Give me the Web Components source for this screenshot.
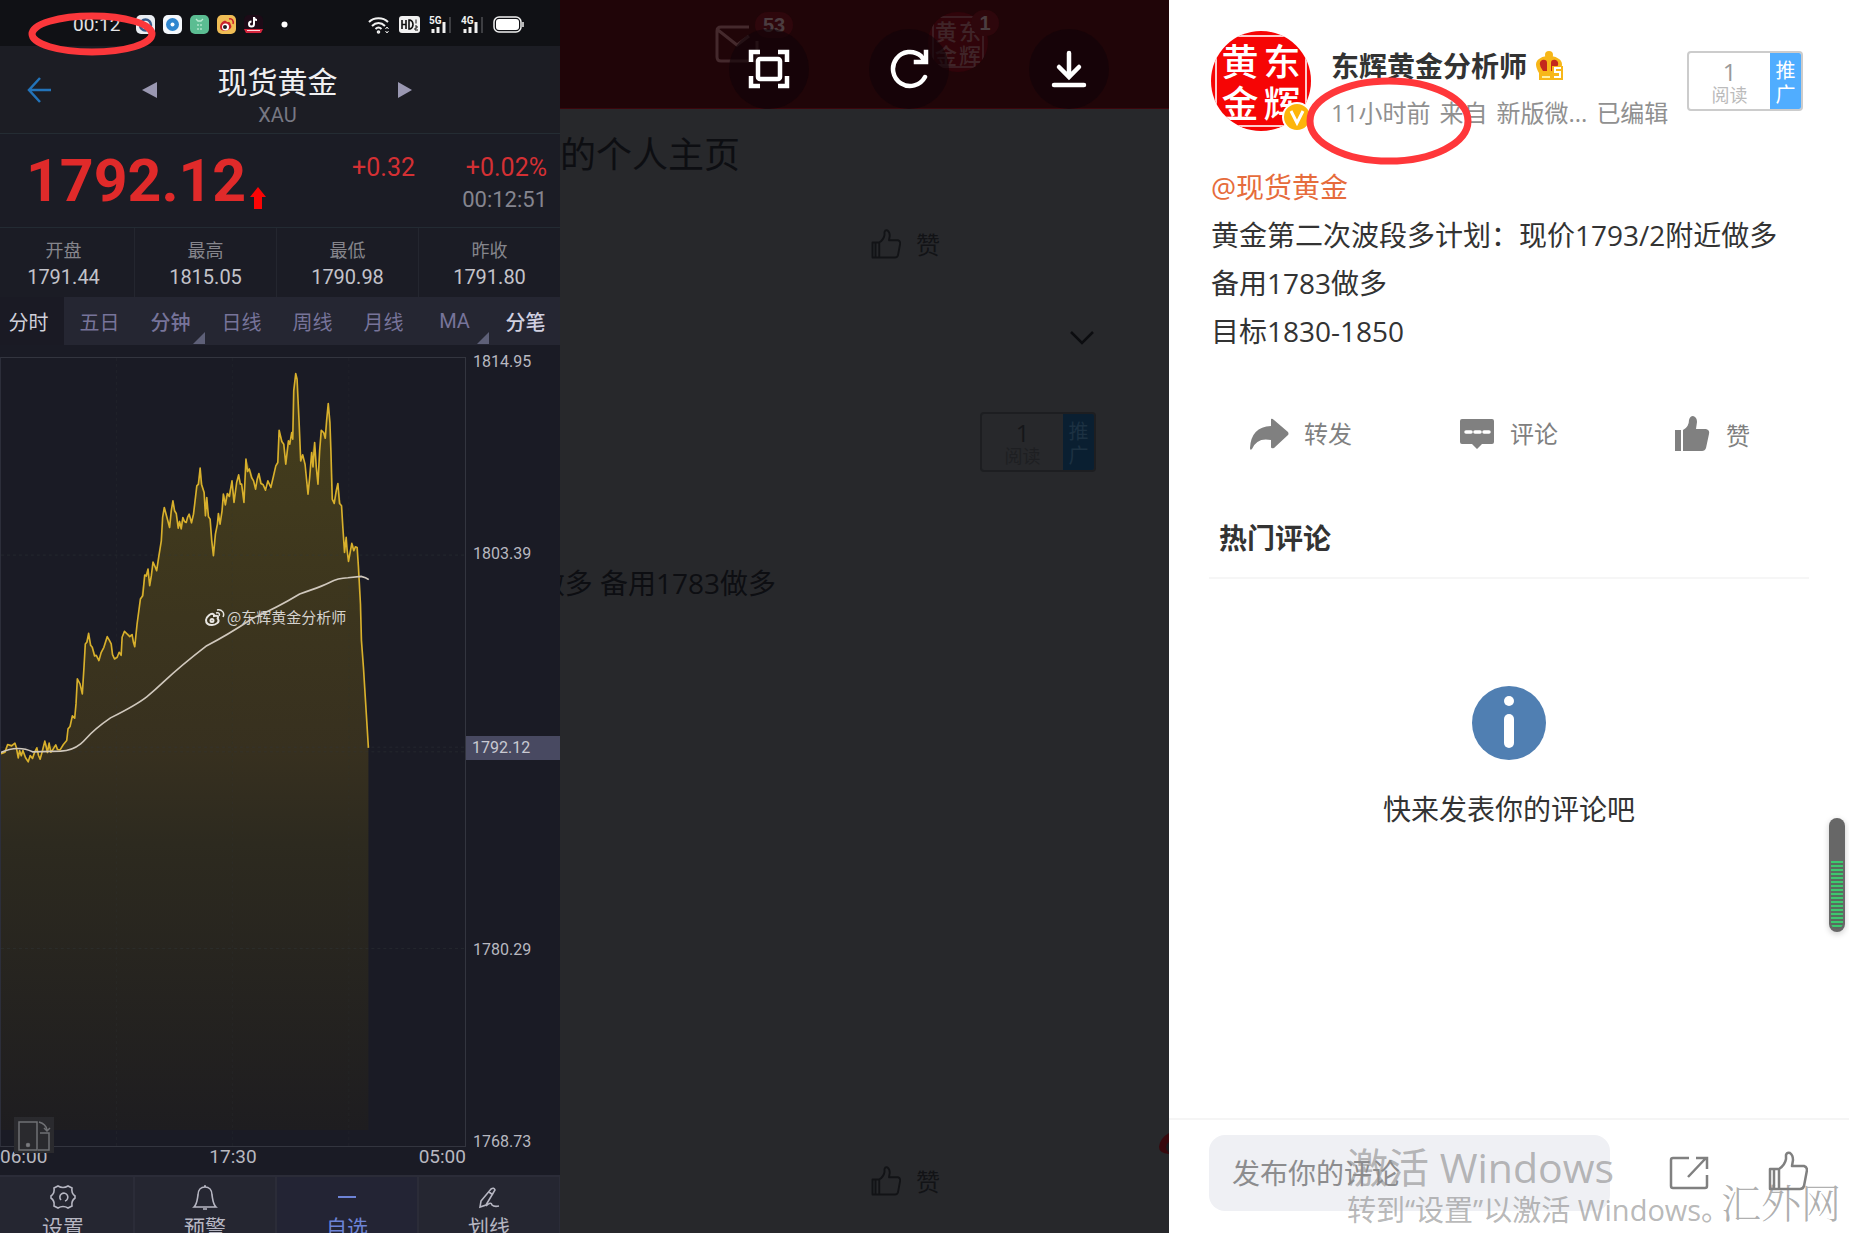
<!DOCTYPE html>
<html lang="zh-CN">
<head>
<meta charset="utf-8">
<title>现货黄金</title>
<style>
  html, body { margin: 0; height: 100%; }
  body { overflow: hidden; background: #27282b; font-family: "Open Sans", "Noto Sans CJK SC", sans-serif; }
</style>
</head>
<body>
<desk-view>
  <quote-screen slot="quote"></quote-screen>
  <profile-backdrop slot="backdrop"></profile-backdrop>
  <post-panel slot="post"></post-panel>
</desk-view>
<script>
const base = '<style>*{box-sizing:border-box}button{font:inherit;color:inherit;background:none;border:0;padding:0;margin:0;cursor:pointer}svg{display:block;flex:none}</style>';
function define(name, render) {
  customElements.define(name, class extends HTMLElement {
    connectedCallback() {
      if (this.shadowRoot) return;
      const t = document.createElement('template');
      t.innerHTML = base + render(this);
      this.attachShadow({ mode: 'open' }).append(t.content.cloneNode(true));
    }
  });
}

define('desk-view', () => `
<style>
  :host { display: grid; grid-template-columns: 560px minmax(0, 1fr) 680px; height: 100vh; position: relative; overflow: hidden; }
  ::slotted(*) { min-width: 0; min-height: 0; }
  .os { position: absolute; right: 129px; bottom: 5px; width: 373px; color: rgba(140,140,140,.62); white-space: nowrap; pointer-events: none; }
  .os p { margin: 0; }
  .big { font-size: 41px; line-height: 50px; }
  .small { font-size: 29px; line-height: 36px; }
  .site { position: absolute; right: 8px; bottom: 8px; font: 300 40px/48px "Noto Serif CJK SC", "Noto Sans CJK SC", serif; color: rgba(130,130,130,.65); pointer-events: none; }
</style>
<slot name="quote"></slot><slot name="backdrop"></slot><slot name="post"></slot>
<div class="os"><p class="big">激活 Windows</p><p class="small">转到“设置”以激活 Windows。</p></div>
<div class="site">汇外网</div>`);

/* ---------- quote screen ---------- */
define('status-bar', () => `
<style>
  :host { display: flex; align-items: center; height: 46px; padding: 3px 36px 0 73px; background: #101115; color: #e4e4e6; position: relative; }
  .time { font: 19px/22px Roboto, sans-serif; width: 63px; }
  .apps { display: flex; gap: 8px; flex: 1; align-items: center; }
  .sys { display: flex; gap: 9px; align-items: center; }
</style>
<span class="time">00:12</span>
<span class="apps">
  <svg width="19" height="19"><rect width="19" height="19" rx="5" fill="#e9edf2"/><circle cx="9.500" cy="10" r="5.500" fill="none" stroke="#355b8c" stroke-width="2.500"/></svg>
  <svg width="19" height="19"><rect width="19" height="19" rx="5" fill="#f4f8fc"/><circle cx="9.500" cy="9.500" r="6.500" fill="#2f86cf"/><circle cx="9.500" cy="9.500" r="2" fill="#fff"/></svg>
  <svg width="19" height="19"><rect width="19" height="19" rx="5" fill="#5bbd92"/><path d="M6 4l2 2h3l2-2M8 9v2M11 9v2M8 13v2M11 13v2" fill="none" stroke="#b9ead2" stroke-width="1.300"/></svg>
  <svg width="19" height="19"><rect width="19" height="19" rx="5" fill="#f0bd55"/><path d="M3 12c0-4 4-7 6-6 1 1 1 1 2 1 3 0 2 2 3 3 3 5-11 9-11 2z" fill="#c9242b"/><circle cx="8.500" cy="12" r="3.500" fill="#fff"/><circle cx="8" cy="12" r="2" fill="#222"/><path d="M12 4c3-1 5 2 4 5" stroke="#c9242b" fill="none" stroke-width="1.500"/></svg>
  <svg width="19" height="19"><rect width="19" height="19" rx="5" fill="#1d0b17"/><path d="M10 2v7a2.500 2.500 0 1 1-2.500-2.500M10 2c0 2 2 3 3 3" fill="none" stroke="#fff" stroke-width="2"/><path d="M0 14h19l-2 4H2z" fill="#d5263d"/><path d="M3 15.500h13" stroke="#ffd8dd"/></svg>
  <svg width="24" height="19"><circle cx="13.500" cy="9.500" r="3" fill="#fff"/></svg>
</span>
<span class="sys">
  <svg width="22" height="18" fill="none" stroke="#f1f1f1" stroke-width="2"><path d="M1 6c5-5 14-5 19 0M4 10c4-4 9-4 13 0M7.500 13c2-2 4-2 6 0"/><circle cx="10.500" cy="16" r=".8"/><path d="M17.500 13l1.500-2 1.500 2M17.500 15l1.500 2 1.500-2" stroke-width="1"/></svg>
  <svg width="21" height="17"><rect width="21" height="17" rx="3" fill="#f1f1f1"/><path d="M3 4v9M7 4v9M3 8.500h4M10 4v9h1q3-1 3-4.500T11 4z" fill="none" stroke="#111" stroke-width="1.600"/><path d="M17 3.500v4M16 10h2v2h-2v2h3" fill="none" stroke="#111"/></svg>
  <svg width="23" height="18"><text x="0" y="8" font-family="Roboto" font-size="10" font-weight="700" fill="#f1f1f1">5G</text><path d="M4 13v4M9 11v6M15 6v11" stroke="#f1f1f1" stroke-width="3"/><path d="M21 1v16" stroke="#3d3e42" stroke-width="2"/></svg>
  <svg width="23" height="18"><text x="0" y="8" font-family="Roboto" font-size="10" font-weight="700" fill="#f1f1f1">4G</text><path d="M4 13v4M9 11v6M15 6v11" stroke="#f1f1f1" stroke-width="3"/><path d="M21 1v16" stroke="#3d3e42" stroke-width="2"/></svg>
  <svg width="31" height="17"><rect x="1" y="1" width="27" height="15" rx="5" fill="none" stroke="#f1f1f1" stroke-width="1.500"/><rect x="3" y="3" width="23" height="11" rx="3" fill="#fff"/><path d="M30 6v5" stroke="#f1f1f1" stroke-width="1.500"/></svg>
</span>`);

define('stat-cell', el => `
<style>
  :host { flex: 0 0 142px; padding: 10px 0 0; text-align: center; position: relative; border-right: 1px solid #24262f; margin: 0; }
  .l { font-size: 18px; line-height: 26px; color: #85858c; }
  .v { font: 20px/26px Roboto, sans-serif; color: #c3c3ca; }
</style><div class="l">${el.getAttribute('label')}</div><div class="v"><slot></slot></div>`);

define('price-chart', () => `
<style>
  :host { display: grid; grid-template-columns: 466px 1fr; grid-template-rows: minmax(0, 1fr) 28px; padding-top: 12px; background: #1a1b25; font-family: Roboto, sans-serif; color: #b8b8c0; }
  .plot { position: relative; border: 1px solid #33353f; border-left-color: #2c2e3a; min-height: 0; }
  .plot > svg { width: 100%; height: 100%; }
  .mark { position: absolute; left: 203px; top: 248px; display: flex; gap: 2px; align-items: center; color: #d5d3cf; font: 15px/22px "Noto Sans CJK SC", sans-serif; white-space: nowrap; }
  .rot { position: absolute; left: 13px; bottom: -7px; background: #2a2a2e; }
  .axis { display: grid; grid-template-rows: 24px 168fr 24px 170fr 24px 177fr 24px 168fr 24px; font-size: 16px; line-height: 24px; margin: -7px 0 -7px; }
  .axis span { padding-left: 7px; }
  .axis span:nth-child(2) { grid-row: 3; }
  .axis span:nth-child(3) { grid-row: 5; }
  .axis span:nth-child(4) { grid-row: 7; }
  .axis span:nth-child(5) { grid-row: 9; }
  .axis .now { background: #484961; padding-left: 6px; color: #c9c9d2; }
  .times { display: flex; justify-content: space-between; font-size: 19px; line-height: 20px; }
</style>
<div class="plot">
  <svg viewBox="0 21 1398 2367" preserveAspectRatio="none">
    <defs><linearGradient id="g" x1="0" y1="0" x2="0" y2="1"><stop offset="0" stop-color="#453e1c"/><stop offset=".5" stop-color="#37301f"/><stop offset=".62" stop-color="#2d2a1f"/><stop offset="1" stop-color="#1e1d20"/></linearGradient></defs>
    <path fill="url(#g)" d="M0 1210L20 1182 42 1178 52 1222 66 1200 82 1234 95 1215 108 1192 118 1226 132 1172 145 1190 165 1183 178 1198 198 1170 208 1128 215 1096 222 1103 230 985 245 1030 254 880 264 848 275 890 295 930 320 858 332 880 340 925 362 910 372 842 395 852 403 888 420 745 433 673 443 655 448 705 458 634 469 660 483 570 492 470 508 530 518 450 534 532 548 500 558 515 567 490 574 516 590 405 600 352 612 425 620 470 630 505 640 615 655 488 662 520 670 430 682 440 696 390 702 455 716 372 725 400 732 455 738 325 755 365 767 415 777 368 797 418 813 410 832 340 838 238 852 280 858 340 866 270 878 265 882 120 888 68 892 110 903 320 910 315 925 430 936 305 945 275 955 400 965 238 977 262 986 158 994 300 1002 458 1015 398 1026 465 1035 605 1040 560 1047 632 1057 578 1073 590 1085 850 1107 1192 1107 2340 0 2340z"/>
    <g stroke="#343a3c" stroke-width="2" stroke-dasharray="9 9" opacity=".65"><path d="M0 613H1398M0 1190H1398M0 1204H1398M0 1795H1398"/><path d="M348 21V2388M697 21V2388M1048 21V2388" opacity=".5"/></g>
    <path fill="none" stroke="#d8b02c" stroke-width="5" stroke-linejoin="round" d="M0 1210L12 1205 20 1182 32 1186 42 1178 46 1190 52 1222 56 1200 61 1216 66 1200 74 1222 82 1234 88 1215 95 1224 101 1206 108 1192 113 1215 118 1226 125 1200 132 1172 136 1188 140 1206 145 1178 150 1205 157 1196 165 1183 170 1197 178 1198 188 1182 198 1170 202 1135 208 1128 215 1096 222 1103 226 1060 230 985 238 1000 245 1030 250 950 254 880 259 874 264 848 270 884 275 890 282 916 287 914 295 930 302 905 310 890 320 858 327 870 332 880 336 912 342 925 350 920 356 905 362 914 365 860 372 842 380 850 388 858 395 852 399 875 403 888 410 820 420 745 427 735 433 673 438 676 443 655 448 705 453 675 458 634 463 645 469 660 475 620 483 570 487 500 492 470 500 500 508 530 513 480 518 450 523 480 528 488 534 532 538 512 543 534 548 500 553 512 558 515 562 500 567 490 574 516 580 490 590 405 595 400 600 352 604 400 612 425 616 495 620 440 625 498 630 505 635 570 640 615 646 550 652 520 655 488 660 520 666 480 670 430 676 462 682 428 688 437 696 390 702 455 710 395 716 372 721 400 725 400 732 455 738 325 743 362 748 354 755 380 761 390 767 415 772 385 777 368 783 398 790 402 797 418 804 390 813 410 820 380 828 345 834 335 838 238 846 272 852 280 858 340 866 270 870 280 876 245 879 265 882 120 888 68 892 85 898 210 903 330 909 312 916 340 920 380 925 430 930 380 936 305 940 348 945 275 950 350 955 400 960 300 965 238 972 245 977 262 981 210 986 158 991 215 994 300 998 445 1004 458 1010 420 1015 398 1020 458 1026 465 1030 530 1035 605 1040 560 1043 600 1047 632 1052 605 1057 578 1063 600 1068 588 1073 590 1077 650 1083 760 1086 870 1092 950 1107 1192"/>
    <path fill="none" stroke="#d0c8bd" stroke-width="5" d="M0 1206Q25 1194 50 1194T95 1204L180 1202Q215 1200 240 1180C260 1165 260 1150 330 1102C370 1082 410 1062 440 1038C500 990 490 985 620 885C650 870 710 835 760 802C800 785 850 760 900 730C940 715 960 710 990 695Q1015 682 1045 681L1085 677Q1100 680 1108 687"/>
  </svg>
  <div class="mark"><svg width="21" height="17" fill="none" stroke="#e8e6e2" stroke-width="2"><path d="M2 11c0-3 5-7 7-6 1 0 1 2 1 2s4-1 4 1c0 1-1 2 0 2 2 3-2 6-6 6S2 14 2 11z"/><circle cx="8" cy="11.500" r="1.500"/><path d="M12 4c3-1 4 1 3 3M13 1c5-1 8 3 6 7" stroke-width="1.500"/></svg>@东辉黄金分析师</div>
  <div class="rot"><svg width="40" height="36" fill="none" stroke="#6f7074" stroke-width="1.500"><path d="M5 5h18v28H5zM26 16h9v17h-11M25 5q7 2 8 8M30 11l3 3 3-3"/><circle cx="14" cy="28" r="1.500" fill="#8d8d90"/></svg></div>
</div>
<div class="axis"><span>1814.95</span><span>1803.39</span><span class="now">1792.12</span><span>1780.29</span><span>1768.73</span></div>
<div class="times"><span>06:00</span><span>17:30</span><span>05:00</span></div>`);

define('quote-screen', () => `
<style>
  :host { display: flex; flex-direction: column; background: #1b1c25; overflow: hidden; font-family: Roboto, "Noto Sans CJK SC", sans-serif; position: relative; }
  .head { height: 88px; display: grid; grid-template-columns: 142px 16px 1fr 16px 147px; align-items: center; border-bottom: 1px solid #242c33; background: #1c1d24; }
  .head .back { padding-left: 27px; }
  .title { text-align: center; padding-top: 12px; }
  h1 { margin: 0; font-size: 30px; line-height: 38px; font-weight: 400; color: #f0f0f2; }
  .title div { font-size: 20px; line-height: 26px; color: #777883; }
  .price { height: 94px; display: flex; padding: 17px 13px 0 26px; border-bottom: 1px solid #232b33; color: #e02a2a; }
  .price strong { font-size: 59px; line-height: 60px; font-weight: 700; }
  .price svg { margin: 35px 0 0 4px; }
  .chg { margin-left: auto; margin-top: 2px; display: grid; grid-template-columns: auto auto; column-gap: 46px; align-content: start; justify-items: end; font-size: 25px; line-height: 30px; color: #d43034; }
  .chg span:last-child { grid-column: 2; font-size: 22px; line-height: 34px; color: #85858f; width: 86px; text-align: right; }
  .stats { display: flex; height: 69px; margin-left: -7px; }
  .tabs { display: flex; height: 48px; margin-left: -7px; background: #252632; color: #77749a; font-size: 20px; }
  .tabs button { flex: 0 0 71px; position: relative; }
  .tabs button:first-child { background: #1a1a24; color: #d0d0da; }
  .tabs button:last-child { color: #d0d0e0; font-weight: 500; }
  .tabs .more::after { content: ""; position: absolute; right: 1px; bottom: 1px; border-left: 12px solid transparent; border-bottom: 12px solid #5e6078; }
  .tabs .strong { font-weight: 500; }
  price-chart { flex: 1; min-height: 0; }
  nav { display: flex; height: 58px; margin-left: -7px; background: #252631; border-top: 2px solid #2b2c38; overflow: hidden; color: #b6b6c2; }
  nav button { flex: 0 0 142px; display: flex; flex-direction: column; align-items: center; justify-content: flex-start; padding-top: 7px; gap: 3px; font-size: 21px; line-height: 30px; border-right: 2px solid #2b2c38; }
  nav .on { color: #6d83d6; background: #232434; }
  .ring { position: absolute; left: 28px; top: 12px; }
</style>
<status-bar></status-bar>
<div class="head">
  <button class="back" aria-label="返回"><svg width="26" height="26" fill="none" stroke="#2373b9" stroke-width="2.500"><path d="M24 13H2M13 1L2 13l11 12"/></svg></button>
  <button aria-label="上一个"><svg width="16" height="16"><path d="M15 0v16L0 8z" fill="#9a98b2"/></svg></button>
  <div class="title"><h1>现货黄金</h1><div>XAU</div></div>
  <button aria-label="下一个"><svg width="16" height="16"><path d="M1 0v16l14-8z" fill="#9a98b2"/></svg></button>
</div>
<div class="price"><strong>1792.12</strong><svg width="16" height="24"><path d="M8 1l8 10h-4v12H4V11H0z" fill="#fb0505"/></svg>
  <div class="chg"><span>+0.32</span><span>+0.02%</span><span>00:12:51</span></div></div>
<div class="stats"><stat-cell label="开盘">1791.44</stat-cell><stat-cell label="最高">1815.05</stat-cell><stat-cell label="最低">1790.98</stat-cell><stat-cell label="昨收">1791.80</stat-cell></div>
<div class="tabs"><button>分时</button><button>五日</button><button class="more strong">分钟</button><button>日线</button><button>周线</button><button>月线</button><button class="more">MA</button><button>分笔</button></div>
<price-chart></price-chart>
<nav>
  <button><svg width="26" height="26" fill="none" stroke="#b6b6c2" stroke-width="1.600"><path d="M8 2q5 3 10 0l4 2q-1 5 3 8v2q-4 3-3 8l-4 2q-5-3-10 0l-4-2q1-5-3-8v-2q4-3 3-8z"/><path d="M11 16a4 4 0 1 1 4 1"/></svg>设置</button>
  <button><svg width="26" height="26" fill="none" stroke="#b6b6c2" stroke-width="1.600"><path d="M2 23c3-3 3-6 4-12 0-5 3-8 7-8s7 3 7 8c1 6 1 9 4 12zM12 2h2M11 25h4"/></svg>预警</button>
  <button class="on"><svg width="26" height="26" stroke="#6d83d6" stroke-width="2"><path d="M4 13h18"/></svg>自选</button>
  <button><svg width="26" height="26" fill="none" stroke="#b6b6c2" stroke-width="1.600"><path d="M5 17L15 5q3-2 4 1L10 21l-6 2zM13 8l4 3M10 22q5-5 6-1 2 2 7 1"/></svg>划线</button>
</nav>
<svg class="ring" width="130" height="46"><ellipse cx="64" cy="22" rx="60" ry="18" fill="none" stroke="#fb373b" stroke-width="7"/></svg>`);

/* ---------- dimmed profile page with the viewer tools ---------- */
define('like-icon', () => `
<style>:host { display: block; color: inherit; }</style>
<svg width="40" height="40" viewBox="0 0 40 40" style="width:var(--s,40px);height:var(--s,40px)" fill="none" stroke="currentColor" stroke-width="2.500" stroke-linejoin="round"><path d="M2 18h9v20H2zM6 18v20M11 18q6-4 7-10V4q1-3 4-2 3 2 3 7l-1 6h12q3 1 3 4l-3 16q-1 3-4 3H11"/></svg>`);

define('read-count', () => `
<style>
  :host { display: flex; width: 116px; height: 60px; border: 2px solid var(--line, #ccc); border-radius: 4px; overflow: hidden; }
  .n { flex: 1; text-align: center; color: var(--num, #999); font-size: 24px; line-height: 26px; padding-top: 6px; }
  .n small { display: block; font-size: 18px; line-height: 20px; color: var(--cap, #bbb); }
  button { width: 31px; background: var(--blue, #50adff); color: var(--fg, #fff); font-size: 20px; line-height: 24px; white-space: normal; overflow-wrap: anywhere; padding: 4px 5px 0; }
</style><div class="n"><slot></slot><small>阅读</small></div><button>推广</button>`);

define('seal-face', () => `
<style>
  :host { display: grid; grid-template-columns: 1fr 1fr; width: var(--d, 100px); height: var(--d, 100px); padding: var(--p, 8px); border-radius: 50%; background: var(--bg, #f60505); color: var(--fg, #fff); font-size: var(--f, 37px); line-height: 1; font-weight: 500; place-items: center; position: relative; overflow: hidden; font-family: "Noto Sans CJK SC", sans-serif; }
  i { position: absolute; inset: 4px; border: 2px solid currentColor; opacity: .8; }
</style><i></i><span>黄</span><span>东</span><span>金</span><span>辉</span>`);

define('profile-backdrop', () => `
<style>
  :host { display: flex; flex-direction: column; position: relative; background: #27282b; overflow: hidden; color: #0d0e12; border-right: 0; }
  header { height: 109px; background: #200508; border-bottom: 1px solid #3c060c; display: flex; padding: 12px 0 0 155px; }
  .mail { width: 78px; margin-right: 135px; position: relative; padding-top: 13px; }
  .face { position: relative; --d: 60px; --p: 6px; --f: 22px; --bg: #30040a; --fg: #3f2428; }
  b { position: absolute; right: 0; top: 0; min-width: 38px; height: 26px; border-radius: 13px; background: #2e070c; color: #4b3d40; font: 700 20px/26px "Liberation Sans", sans-serif; text-align: center; }
  .face b { right: -11px; top: -2px; min-width: 28px; }
  h2 { margin: 26px 0 0; font-weight: 400; font-size: 36px; line-height: 40px; }
  .like { display: flex; gap: 15px; align-items: center; padding-left: 311px; font-size: 24px; line-height: 32px; color: #121316; --s: 30px; }
  .l1 { margin-top: 52px; }
  .like span { padding-top: 2px; }
  .chev { align-self: flex-end; margin: 70px 75px 0 0; }
  read-count { align-self: flex-end; margin: 67px 73px 0 0; --line: #1d1e21; --num: #151619; --cap: #1e1f22; --blue: #0a1f31; --fg: #1c3142; }
  .clip { margin: 91px 0 0; width: 216px; overflow: hidden; display: flex; justify-content: flex-end; font-size: 28px; line-height: 40px; white-space: nowrap; }
  .l2 { margin-top: auto; padding-bottom: 35px; }
  .tools { position: absolute; right: 60px; top: 29px; display: grid; grid-template-columns: 140px 160px 80px; }
  .tools button { width: 80px; height: 80px; border-radius: 50%; background: rgba(16,3,8,.62); display: grid; place-items: center; }
  .weibo { position: absolute; right: 0; bottom: 78px; }
</style>
<header>
  <div class="mail"><svg width="44" height="38" fill="none" stroke="#44292c" stroke-width="3"><path d="M34 2H6q-4 0-4 4v26q0 4 4 4h32q4 0 4-4V16M3 5l19 15 12-9"/></svg><b>53</b></div>
  <div class="face"><seal-face></seal-face><b>1</b></div>
</header>
<h2>的个人主页</h2>
<div class="like l1"><like-icon></like-icon><span>赞</span></div>
<svg class="chev" width="24" height="14" fill="none" stroke="#0c0d10" stroke-width="2.500"><path d="M1 1l11 11L23 1"/></svg>
<read-count>1</read-count>
<div class="clip">做多 备用1783做多</div>
<div class="like l2"><like-icon></like-icon><span>赞</span></div>
<svg class="weibo" width="10" height="22"><path d="M10 0Q1 5 0 14q0 6 10 7z" fill="#38080d"/><path d="M10 9q-6 4 0 11z" fill="#1a1b1e"/></svg>
<div class="tools">
  <button aria-label="原始大小"><svg width="42" height="40" fill="none" stroke="#fff" stroke-width="4.500"><path d="M3 13V3h9M30 3h9v10M39 27v10h-9M12 37H3V27"/><rect x="10" y="10" width="22" height="20" rx="2"/></svg></button>
  <button aria-label="旋转"><svg width="40" height="40" fill="none" stroke="#fff" stroke-width="4.500" stroke-linecap="round"><path d="M36 28A17 17 0 1 1 32 7l4 5"/><path d="M37 3v10H27" stroke-linecap="square"/></svg></button>
  <button aria-label="下载"><svg width="36" height="38" fill="none" stroke="#fff" stroke-width="4.500" stroke-linecap="round"><path d="M18 3v22M8 17l10 10 10-10M3 35h30"/></svg></button>
</div>`);

/* ---------- post ---------- */
define('post-panel', () => `
<style>
  :host { display: flex; flex-direction: column; background: #fff; color: #333; position: relative; overflow: hidden; }
  .top { display: flex; padding: 31px 46px 0 42px; height: 163px; align-items: flex-start; }
  .ava { position: relative; flex: none; }
  .ava svg { position: absolute; right: -2px; bottom: -2px; }
  .who { margin: 14px 0 0 20px; flex: 1; min-width: 0; white-space: nowrap; }
  .name { display: flex; gap: 8px; align-items: center; font-size: 28px; line-height: 42px; font-weight: 700; }
  .meta { display: flex; gap: 9px; font-size: 24px; line-height: 36px; margin-top: 8px; color: #909090; }
  read-count { margin-top: 20px; flex: none; }
  .text { padding: 0 42px; font-size: 28px; line-height: 48px; }
  .text a { color: #e66c3c; text-decoration: none; }
  .text p { margin: 0; white-space: nowrap; }
  .acts { display: grid; grid-template-columns: 210px 214px auto; justify-content: start; padding: 57px 0 0 80px; color: #808080; font-size: 24px; line-height: 40px; }
  .acts button { display: flex; align-items: center; gap: 15px; }
  .acts button:last-child span { padding-top: 4px; }
  h3 { margin: 58px 40px 0; padding: 0 10px 15px; font-size: 28px; line-height: 48px; border-bottom: 2px solid #f6f6f6; }
  .empty { display: flex; flex-direction: column; align-items: center; margin-top: 107px; gap: 29px; font-size: 28px; line-height: 40px; }
  .bar { margin-top: auto; height: 115px; border-top: 2px solid #f5f5f5; display: flex; align-items: flex-start; padding: 15px 39px 0 40px; color: #808080; }
  input { width: 401px; height: 76px; border: 0; border-radius: 16px; background: #eff0f4; padding: 0 23px; font: 28px/40px "Open Sans", "Noto Sans CJK SC", sans-serif; }
  input::placeholder { color: #8c8c8e; opacity: 1; }
  .bar button { margin: 16px 0 0 59px; }
  .ring { position: absolute; left: 136px; top: 76px; pointer-events: none; }
  .meter { position: absolute; right: 4px; top: 818px; width: 16px; height: 114px; border-radius: 8px; background: #676767; box-shadow: 0 2px 6px rgba(0,0,0,.2); padding: 43px 2px 3px; }
  .meter i { display: block; height: 100%; background: repeating-linear-gradient(#3cc96e 0 2px, #5b6a5f 2px 4px); border-radius: 0 0 6px 6px; }
</style>
<div class="top">
  <div class="ava"><seal-face></seal-face><svg width="32" height="32"><circle cx="16" cy="16" r="14" fill="#fdb50b" stroke="#fff" stroke-width="2"/><path d="M10 10l6 12 6-12" fill="none" stroke="#fff" stroke-width="3"/></svg></div>
  <div class="who">
    <div class="name">东辉黄金分析师<svg width="30" height="30"><circle cx="14" cy="4" r="4" fill="#f7b719"/><path d="M4 22Q-2 12 4 8q5-4 10-2 5-2 10 2 6 4 0 14v7H4z" fill="#f7b719"/><path d="M8 20Q2 12 7 9q5-1 5 3v8zM16 20v-8q0-4 5-3 5 3-1 11z" fill="#c4281d"/><path d="M7 26h8" stroke="#fff0a0" stroke-width="2"/><rect x="17" y="15" width="11" height="14" fill="#f7b719"/><path d="M26 17h-6v4h5v5h-6" fill="none" stroke="#fff" stroke-width="2"/></svg></div>
    <div class="meta"><span>11小时前</span><span>来自</span><span>新版微...</span><span>已编辑</span></div>
  </div>
  <read-count>1</read-count>
</div>
<div class="text"><a href="#">@现货黄金</a><p>黄金第二次波段多计划：现价1793/2附近做多</p><p>备用1783做多</p><p>目标1830-1850</p></div>
<div class="acts">
  <button><svg width="40" height="32" fill="#808080"><path d="M22 1Q23 0 25 2l14 12q1 2 0 3L25 30q-3 1-3-1v-7Q8 19 3 31q-2 2-2-1Q2 9 22 8z"/></svg>转发</button>
  <button><svg width="36" height="32"><path d="M3 1h30q2 0 2 2v21q0 2-2 2H23l-5 5-5-5H3q-2 0-2-2V3q0-2 2-2z" fill="#808080"/><path d="M7 14h5M16 14h5M25 14h5" stroke="#fff" stroke-width="3.500" stroke-linecap="round"/></svg>评论</button>
  <button><svg width="38" height="36" fill="#808080"><path d="M2 14h6v21H2zM10 14q6-3 6-10 1-4 4-4 4 1 4 6l-1 7h10q4 1 3 5l-3 14q-1 3-4 3H10z"/></svg><span>赞</span></button>
</div>
<h3>热门评论</h3>
<div class="empty"><svg width="74" height="74"><circle cx="37" cy="37" r="37" fill="#507fb2"/><circle cx="37" cy="15" r="5" fill="#fff"/><rect x="32" y="28" width="10" height="34" rx="5" fill="#fff"/></svg><span>快来发表你的评论吧</span></div>
<div class="bar">
  <input type="text" aria-label="发布你的评论" placeholder="发布你的评论">
  <button aria-label="分享"><svg width="40" height="40" fill="none" stroke="#808080" stroke-width="2.500"><path d="M20 7H4q-2 0-2 2v26q0 2 2 2h32q2 0 2-2V24M19 26L37 7M27 7h11v11"/></svg></button>
  <button aria-label="赞"><like-icon></like-icon></button>
</div>
<svg class="ring" width="168" height="90"><ellipse cx="84" cy="45" rx="79" ry="40" fill="none" stroke="#ff373a" stroke-width="7"/></svg>
<div class="meter"><i></i></div>`);
</script>
</body>
</html>
